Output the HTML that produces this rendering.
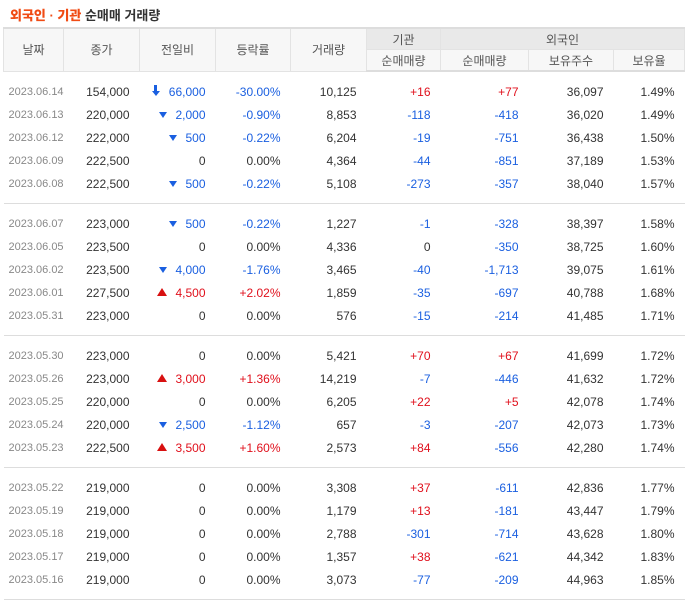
<!DOCTYPE html><html><head><meta charset="utf-8"><style>
body{margin:0;background:#fff;font-family:"Liberation Sans","Noto Sans CJK KR",sans-serif;}
.t{position:absolute;left:10px;top:5px;font-size:13px;font-weight:bold;color:#333;}
.t b{color:#f04b14}
table{position:absolute;left:3px;top:27px;border-collapse:collapse;table-layout:fixed;width:681px;}
th{font-weight:normal;font-size:12px;color:#555;background:#f7f7f7;border:1px solid #e3e3e3;height:20px;padding:0;}
thead tr:first-child th{border-top:2px solid #ddd}
th.g{background:#e9e9e9}
thead tr:last-child th{border-bottom:2px solid #ddd}
td{height:23px;padding:0 10px 0 0;text-align:right;font-size:12px;color:#333;white-space:nowrap;}
td.d{text-align:left;padding-left:5px;font-size:11px;color:#888}
.r{color:#e0101c}.b{color:#1a5fe0}
.dn:before{content:"";display:inline-block;border:4px solid transparent;border-top:6px solid #1a5fe0;border-bottom:0;margin-right:8px;vertical-align:1px}
.up:before{content:"";display:inline-block;border:5px solid transparent;border-bottom:8px solid #d81010;border-top:0;margin-right:8px;vertical-align:1px}
.ar{display:inline-block;position:relative;width:8px;height:12px;margin-right:9px;vertical-align:-1px}
.ar:before{content:"";position:absolute;left:2.5px;top:0;width:3px;height:7px;background:#1a5fe0}
.ar:after{content:"";position:absolute;left:0;top:6px;border:4px solid transparent;border-top:5px solid #1a5fe0;border-bottom:0}
tr.sp td{height:8px}
tr.sep td{height:0;border-top:1px solid #ddd;padding:0}
</style></head><body>
<div class="t"><b>외국인 · 기관</b> 순매매 거래량</div>
<table>
<colgroup><col style="width:60px"><col style="width:76px"><col style="width:76px"><col style="width:75px"><col style="width:76px"><col style="width:74px"><col style="width:88px"><col style="width:85px"><col style="width:71px"></colgroup>
<thead><tr><th rowspan="2">날짜</th><th rowspan="2">종가</th><th rowspan="2">전일비</th><th rowspan="2">등락률</th><th rowspan="2">거래량</th><th class="g">기관</th><th class="g" colspan="3">외국인</th></tr>
<tr><th>순매매량</th><th>순매매량</th><th>보유주수</th><th>보유율</th></tr></thead>
<tbody>
<tr class="sp"><td colspan="9"></td></tr>
<tr><td class="d">2023.06.14</td><td>154,000</td><td class="b"><span class="ar"></span>66,000</td><td class="b">-30.00%</td><td>10,125</td><td class="r">+16</td><td class="r">+77</td><td>36,097</td><td>1.49%</td></tr>
<tr><td class="d">2023.06.13</td><td>220,000</td><td class="b dn">2,000</td><td class="b">-0.90%</td><td>8,853</td><td class="b">-118</td><td class="b">-418</td><td>36,020</td><td>1.49%</td></tr>
<tr><td class="d">2023.06.12</td><td>222,000</td><td class="b dn">500</td><td class="b">-0.22%</td><td>6,204</td><td class="b">-19</td><td class="b">-751</td><td>36,438</td><td>1.50%</td></tr>
<tr><td class="d">2023.06.09</td><td>222,500</td><td>0</td><td>0.00%</td><td>4,364</td><td class="b">-44</td><td class="b">-851</td><td>37,189</td><td>1.53%</td></tr>
<tr><td class="d">2023.06.08</td><td>222,500</td><td class="b dn">500</td><td class="b">-0.22%</td><td>5,108</td><td class="b">-273</td><td class="b">-357</td><td>38,040</td><td>1.57%</td></tr>
<tr class="sp"><td colspan="9"></td></tr><tr class="sep"><td colspan="9"></td></tr><tr class="sp"><td colspan="9"></td></tr>
<tr><td class="d">2023.06.07</td><td>223,000</td><td class="b dn">500</td><td class="b">-0.22%</td><td>1,227</td><td class="b">-1</td><td class="b">-328</td><td>38,397</td><td>1.58%</td></tr>
<tr><td class="d">2023.06.05</td><td>223,500</td><td>0</td><td>0.00%</td><td>4,336</td><td>0</td><td class="b">-350</td><td>38,725</td><td>1.60%</td></tr>
<tr><td class="d">2023.06.02</td><td>223,500</td><td class="b dn">4,000</td><td class="b">-1.76%</td><td>3,465</td><td class="b">-40</td><td class="b">-1,713</td><td>39,075</td><td>1.61%</td></tr>
<tr><td class="d">2023.06.01</td><td>227,500</td><td class="r up">4,500</td><td class="r">+2.02%</td><td>1,859</td><td class="b">-35</td><td class="b">-697</td><td>40,788</td><td>1.68%</td></tr>
<tr><td class="d">2023.05.31</td><td>223,000</td><td>0</td><td>0.00%</td><td>576</td><td class="b">-15</td><td class="b">-214</td><td>41,485</td><td>1.71%</td></tr>
<tr class="sp"><td colspan="9"></td></tr><tr class="sep"><td colspan="9"></td></tr><tr class="sp"><td colspan="9"></td></tr>
<tr><td class="d">2023.05.30</td><td>223,000</td><td>0</td><td>0.00%</td><td>5,421</td><td class="r">+70</td><td class="r">+67</td><td>41,699</td><td>1.72%</td></tr>
<tr><td class="d">2023.05.26</td><td>223,000</td><td class="r up">3,000</td><td class="r">+1.36%</td><td>14,219</td><td class="b">-7</td><td class="b">-446</td><td>41,632</td><td>1.72%</td></tr>
<tr><td class="d">2023.05.25</td><td>220,000</td><td>0</td><td>0.00%</td><td>6,205</td><td class="r">+22</td><td class="r">+5</td><td>42,078</td><td>1.74%</td></tr>
<tr><td class="d">2023.05.24</td><td>220,000</td><td class="b dn">2,500</td><td class="b">-1.12%</td><td>657</td><td class="b">-3</td><td class="b">-207</td><td>42,073</td><td>1.73%</td></tr>
<tr><td class="d">2023.05.23</td><td>222,500</td><td class="r up">3,500</td><td class="r">+1.60%</td><td>2,573</td><td class="r">+84</td><td class="b">-556</td><td>42,280</td><td>1.74%</td></tr>
<tr class="sp"><td colspan="9"></td></tr><tr class="sep"><td colspan="9"></td></tr><tr class="sp"><td colspan="9"></td></tr>
<tr><td class="d">2023.05.22</td><td>219,000</td><td>0</td><td>0.00%</td><td>3,308</td><td class="r">+37</td><td class="b">-611</td><td>42,836</td><td>1.77%</td></tr>
<tr><td class="d">2023.05.19</td><td>219,000</td><td>0</td><td>0.00%</td><td>1,179</td><td class="r">+13</td><td class="b">-181</td><td>43,447</td><td>1.79%</td></tr>
<tr><td class="d">2023.05.18</td><td>219,000</td><td>0</td><td>0.00%</td><td>2,788</td><td class="b">-301</td><td class="b">-714</td><td>43,628</td><td>1.80%</td></tr>
<tr><td class="d">2023.05.17</td><td>219,000</td><td>0</td><td>0.00%</td><td>1,357</td><td class="r">+38</td><td class="b">-621</td><td>44,342</td><td>1.83%</td></tr>
<tr><td class="d">2023.05.16</td><td>219,000</td><td>0</td><td>0.00%</td><td>3,073</td><td class="b">-77</td><td class="b">-209</td><td>44,963</td><td>1.85%</td></tr>
<tr class="sp"><td colspan="9"></td></tr><tr class="sep"><td colspan="9"></td></tr>
</tbody></table>
</body></html>
